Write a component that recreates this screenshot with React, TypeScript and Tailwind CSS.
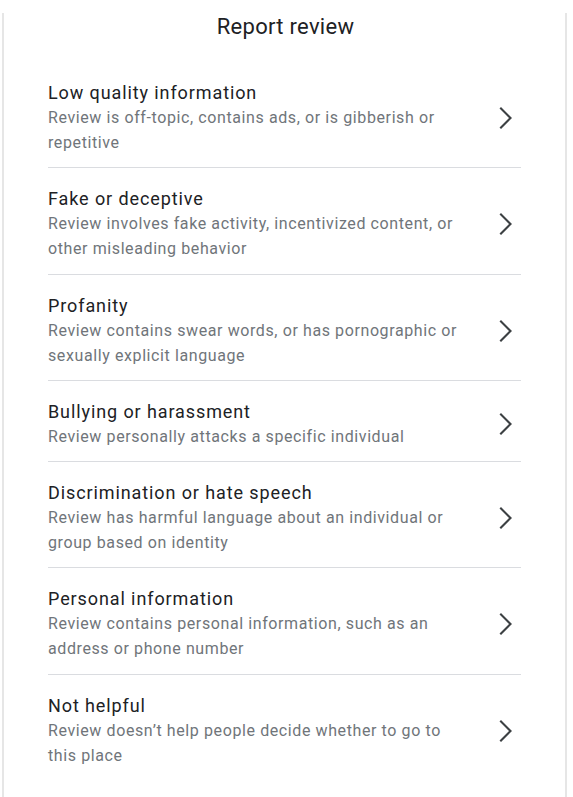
const reasons = [
  {
    title: 'Low quality information',
    desc: 'Review is off-topic, contains ads, or is gibberish or repetitive',
  },
  {
    title: 'Fake or deceptive',
    desc: 'Review involves fake activity, incentivized content, or other misleading behavior',
  },
  {
    title: 'Profanity',
    desc: 'Review contains swear words, or has pornographic or sexually explicit language',
  },
  {
    title: 'Bullying or harassment',
    desc: 'Review personally attacks a specific individual',
  },
  {
    title: 'Discrimination or hate speech',
    desc: 'Review has harmful language about an individual or group based on identity',
  },
  {
    title: 'Personal information',
    desc: 'Review contains personal information, such as an address or phone number',
  },
  {
    title: 'Not helpful',
    desc: 'Review doesn\u2019t help people decide whether to go to this place',
  },
];

function Chevron() {
  return (
    <svg width="16" height="24" viewBox="0 0 16 24" fill="none" className="text-[#3c4043]">
      <path d="M3 2.5 L12.5 12 L3 21.5" stroke="currentColor" strokeWidth="2.1" strokeLinecap="square" strokeLinejoin="miter" />
    </svg>
  );
}

export default function App() {
  return (
    <div className="min-h-[797px] bg-white" style={{ fontFamily: 'Roboto, "Liberation Sans", sans-serif' }}>
      <div className="ml-[2px] mt-[13px] w-[565px] min-h-[784px] border-x-2 border-[#e6e6e6] px-[44px]">
        {/* header */}
        <h1 className="mr-[-2px] pt-px text-center text-[22px] leading-[26px] tracking-[0.3px] text-[#202124]">Report review</h1>

        <ul className="mt-[22px] flex flex-col">
          {reasons.map((r, i) => (
            <li
              key={r.title}
              className={`flex items-center pt-[19px] pb-[12.25px] ${i < reasons.length - 1 ? 'border-b border-[#dadce0]' : ''}`}
            >
              <div className="w-[424px] shrink-0">
                <div className="text-[18px] leading-[24px] tracking-[0.9px] text-[#202124]">{r.title}</div>
                <div className="text-[16px] leading-[25px] tracking-[0.6px] text-[#70757a]">{r.desc}</div>
              </div>
              <div className="ml-auto mr-[7px] flex h-6 w-4 items-center justify-center">
                <Chevron />
              </div>
            </li>
          ))}
        </ul>
      </div>
    </div>
  );
}
